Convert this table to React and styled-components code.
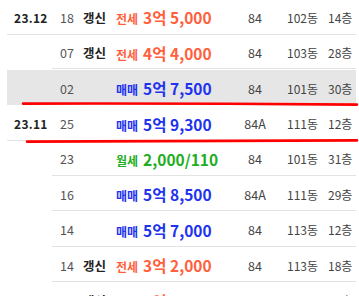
import React from 'react';
import styled, { createGlobalStyle } from 'styled-components';

const Global = createGlobalStyle`
  html, body {
    margin: 0;
    padding: 0;
    background: #ffffff;
    font-family: "Noto Sans CJK KR", "Noto Sans", sans-serif;
    overflow: hidden;
  }
`;

const COLORS = {
  전세: '#ff5f3d',
  매매: '#2233ee',
  월세: '#1fae1f',
};

const Page = styled.div`
  position: relative;
  width: 359px;
  height: 296px;
  overflow: hidden;
`;

const List = styled.div`
  margin: -0.43px 3px 0 7px;
  display: flex;
  flex-direction: column;
`;

const Row = styled.div`
  display: grid;
  grid-template-columns: 45px 29px 34px 118px 44px 47px 1fr;
  align-items: center;
  height: 34.43px;
  margin-bottom: 1px;
  padding-top: 1px;
  box-sizing: content-box;
  height: 33.43px;
  background-color: ${(p) => (p.$active ? '#e6e6e6' : 'transparent')};
  box-shadow: ${(p) => (p.$head ? '0 1px 0 0 #e3e3e3' : 'none')};
  background-image: ${(p) => (p.$head ? 'none' : 'linear-gradient(#e3e3e3, #e3e3e3)')};
  background-size: calc(100% - 45px) 1px;
  background-position: 45px 100%;
  background-repeat: no-repeat;
`;

const DateCell = styled.div`
  padding-left: 7px;
  font-size: 12px;
  font-weight: 700;
  color: #222;
  letter-spacing: 0.3px;
`;

const Num = styled.div`
  padding-left: 8px;
  font-size: 12.5px;
  color: #555;
`;

const Renew = styled.div`
  padding-left: 2px;
  font-size: 12.5px;
  font-weight: 700;
  color: #222;
`;

const Price = styled.div`
  display: flex;
  align-items: baseline;
  gap: 5px;
  padding-left: 1px;
  color: ${(p) => p.$color};
  font-weight: 700;
  white-space: nowrap;
`;

const Kind = styled.span`
  font-size: 12px;
`;

const Amount = styled.span`
  font-size: 15.5px;
`;

const Area = styled.div`
  text-align: center;
  font-size: 12.5px;
  color: #444;
`;

const Dong = styled.div`
  padding-left: 10px;
  font-size: 12px;
  color: #444;
  white-space: nowrap;
`;

const Floor = styled.div`
  padding-left: 4px;
  font-size: 12px;
  color: #444;
  white-space: nowrap;
`;

const Marks = styled.svg`
  position: absolute;
  left: 0;
  top: 0;
  pointer-events: none;
`;

const rows = [
  { date: '23.12', num: '18', renew: true, kind: '전세', amount: '3억 5,000', area: '84', dong: '102동', floor: '14층' },
  { num: '07', renew: true, kind: '전세', amount: '4억 4,000', area: '84', dong: '103동', floor: '28층' },
  { num: '02', kind: '매매', amount: '5억 7,500', area: '84', dong: '101동', floor: '30층', active: true },
  { date: '23.11', num: '25', kind: '매매', amount: '5억 9,300', area: '84A', dong: '111동', floor: '12층' },
  { num: '23', kind: '월세', amount: '2,000/110', area: '84', dong: '101동', floor: '31층' },
  { num: '16', kind: '매매', amount: '5억 8,500', area: '84A', dong: '111동', floor: '29층' },
  { num: '14', kind: '매매', amount: '5억 7,000', area: '84', dong: '113동', floor: '12층' },
  { num: '14', renew: true, kind: '전세', amount: '3억 2,000', area: '84', dong: '113동', floor: '18층' },
  { num: '11', renew: true, kind: '전세', amount: '4억 2,000', area: '84', dong: '102동', floor: '15층' },
];

export default function App() {
  return (
    <Page>
      <Global />
      <List>
        {rows.map((r, i) => (
          <Row key={i} $head={!!r.date} $active={r.active}>
            <DateCell>{r.date || ''}</DateCell>
            <Num>{r.num}</Num>
            <Renew>{r.renew ? '갱신' : ''}</Renew>
            <Price $color={COLORS[r.kind]}>
              <Kind>{r.kind}</Kind>
              <Amount>{r.amount}</Amount>
            </Price>
            <Area>{r.area}</Area>
            <Dong>{r.dong}</Dong>
            <Floor>{r.floor}</Floor>
          </Row>
        ))}
      </List>
      <Marks width="359" height="296">
        <path d="M23 103.6 Q190 103.2 357 104.6" stroke="#ff0000" strokeWidth="2.6" fill="none" strokeLinecap="round" />
        <path d="M27 141.6 Q190 141 357 140.4" stroke="#ff0000" strokeWidth="2.6" fill="none" strokeLinecap="round" />
      </Marks>
    </Page>
  );
}
